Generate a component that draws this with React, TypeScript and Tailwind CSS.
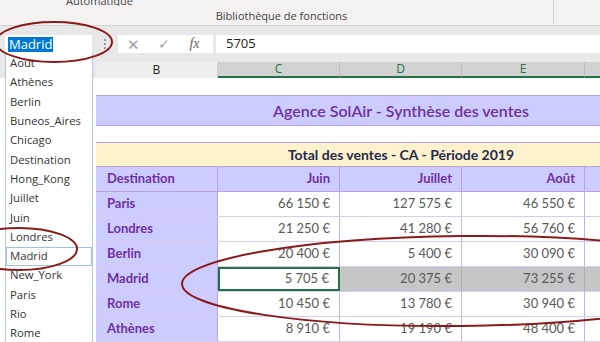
import React from "react";

const months = ["Juin", "Juillet", "Août"];

const rows = [
  { city: "Paris", values: ["66 150 €", "127 575 €", "46 550 €"] },
  { city: "Londres", values: ["21 250 €", "41 280 €", "56 760 €"] },
  { city: "Berlin", values: ["20 400 €", "5 400 €", "30 090 €"] },
  { city: "Madrid", values: ["5 705 €", "20 375 €", "73 255 €"], selected: true },
  { city: "Rome", values: ["10 450 €", "13 780 €", "30 940 €"] },
  { city: "Athènes", values: ["8 910 €", "19 190 €", "48 400 €"] },
];

const listItems = [
  "Août",
  "Athènes",
  "Berlin",
  "Buneos_Aires",
  "Chicago",
  "Destination",
  "Hong_Kong",
  "Juillet",
  "Juin",
  "Londres",
  "Madrid",
  "New_York",
  "Paris",
  "Rio",
  "Rome",
];

const colW = ["w-[122px]", "w-[122px]", "w-[123px]"];

const App = () => {
  return (
    <div className="relative w-[600px] h-[342px] overflow-hidden bg-white font-['Lato',sans-serif]">
      {/* Ribbon */}
      <div className="h-[25px] bg-[#f3f2f1] flex font-['Open_Sans',sans-serif] text-[11px] text-[#444]">
        <div className="w-[553px] flex flex-col">
          <div className="h-[6px] overflow-hidden flex items-end pl-[66px]">
            <span className="leading-none text-[11px]">Automatique</span>
          </div>
          <div className="flex-1 flex items-center justify-center pl-[10px] pt-[2px]">
            Bibliothèque de fonctions
          </div>
        </div>
        <div className="w-px h-[24px] bg-[#d6d6d6]" />
      </div>
      <div className="h-px bg-[#d4d4d4]" />

      {/* Formula bar */}
      <div className="h-[36px] bg-[#e8e8e8] flex items-center font-['Open_Sans',sans-serif]">
        <div className="ml-[5px] w-[87px] h-[18px] bg-white flex items-center pl-[3px]">
          <span className="bg-[#0078d7] text-white text-[13px] leading-[15px] px-[1px]">Madrid</span>
        </div>
        <div className="w-[26px] flex flex-col items-center gap-[2px]">
          <span className="w-[2px] h-[2px] bg-[#9a9a9a]" />
          <span className="w-[2px] h-[2px] bg-[#9a9a9a]" />
          <span className="w-[2px] h-[2px] bg-[#9a9a9a]" />
        </div>
        <div className="w-[95px] h-[18px] bg-white flex items-center text-[#a0a0a0]">
          <span className="w-[31px] text-center text-[15px] leading-none">✕</span>
          <span className="w-[29px] text-center text-[14px] leading-none">✓</span>
          <span className="w-[33px] text-center text-[14px] leading-none italic font-['Liberation_Serif',serif] text-[#666]">fx</span>
        </div>
        <div className="ml-[3px] flex-1 h-[18px] bg-white flex items-center pl-[10px] text-[13px] text-[#222]">
          5705
        </div>
      </div>

      {/* Column headers */}
      <div className="h-[16px] flex text-[12px] font-['Open_Sans',sans-serif] leading-[16px] bg-[#e8e8e8]">
        <div className="w-[96px]" />
        <div className="w-[122px] bg-[#efefef] border-r border-[#d0d0d0] text-center text-[#222]">B</div>
        {["C", "D", "E"].map((c, i) => (
          <div
            key={c}
            className={`${colW[i]} bg-[#d2d2d2] border-r border-[#bdbdbd] border-b-2 border-b-[#217346] text-center text-[#217346] leading-[14px]`}
          >
            {c}
          </div>
        ))}
        <div className="flex-1 bg-[#d2d2d2] border-b-2 border-b-[#217346]" />
      </div>

      {/* Sheet */}
      <div className="pl-[96px] pt-[17px]">
        <div className="w-[620px] h-[31px] bg-[#ccccff] border-y border-[#b9a2de] flex items-center justify-center pr-[10px] text-[16px] text-[#7030a0] font-semibold">
          Agence SolAir - Synthèse des ventes
        </div>
        <div className="h-[16px]" />
        <div className="w-[620px] h-[25px] bg-[#fff2cc] border-y border-[#b9a2de] flex items-center justify-center pr-[10px] text-[14px] font-bold text-[#1f2a4d]">
          Total des ventes - CA - Période 2019
        </div>
        <div className="flex h-[25px] border-b border-[#b9a2de] bg-[#ccccff] text-[13px] font-bold text-[#7030a0]">
          <div className="w-[122px] border-r border-[#b9a2de] flex items-center pl-[11px]">Destination</div>
          {months.map((m, i) => (
            <div key={m} className={`${colW[i]} border-r border-[#b9a2de] flex items-center justify-end pr-[9px]`}>
              {m}
            </div>
          ))}
          <div className="flex-1" />
        </div>
        {rows.map((r) => (
          <div key={r.city} className="flex h-[25px] border-b border-[#d9cdee] text-[13px]">
            <div className="w-[122px] bg-[#ccccff] border-r border-[#b9a2de] flex items-center pl-[11px] font-bold text-[#7030a0]">
              {r.city}
            </div>
            {r.values.map((v, i) => (
              <div
                key={i}
                className={`${colW[i]} flex items-center justify-end pr-[9px] text-[#595959] ${
                  r.selected
                    ? i === 0
                      ? "bg-white border-2 border-[#217346]"
                      : "bg-[#c6c6c6] border-r border-[#b0b0b0]"
                    : "border-r border-[#c8b3e6]"
                }`}
              >
                {v}
              </div>
            ))}
            <div className={`flex-1 ${r.selected ? "bg-[#c6c6c6]" : ""}`} />
          </div>
        ))}
      </div>

      {/* Dropdown list */}
      <div className="absolute left-[5px] top-[53px] w-[88px] h-[300px] bg-white border-x border-[#b7c9db] font-['Open_Sans',sans-serif] text-[11.3px] text-[#333] pt-[1px]">
        {listItems.map((item, i) => (
          <div
            key={item + i}
            className={`h-[19.3px] flex items-center pl-[3px] ${i === 10 ? "border border-[#9ac3e6]" : "border border-transparent"}`}
          >
            {item}
          </div>
        ))}
      </div>

      {/* Highlight ellipses */}
      <svg className="absolute inset-0 pointer-events-none" width="600" height="342" viewBox="0 0 600 342">
        <g fill="none" stroke="#8b1a1a" strokeWidth="2">
          <ellipse cx="54" cy="42" rx="58" ry="20" />
          <ellipse cx="19" cy="249" rx="58" ry="21" />
          <ellipse cx="461" cy="281" rx="279" ry="45" transform="rotate(-0.6 461 281)" />
        </g>
      </svg>
    </div>
  );
};

export default App;
